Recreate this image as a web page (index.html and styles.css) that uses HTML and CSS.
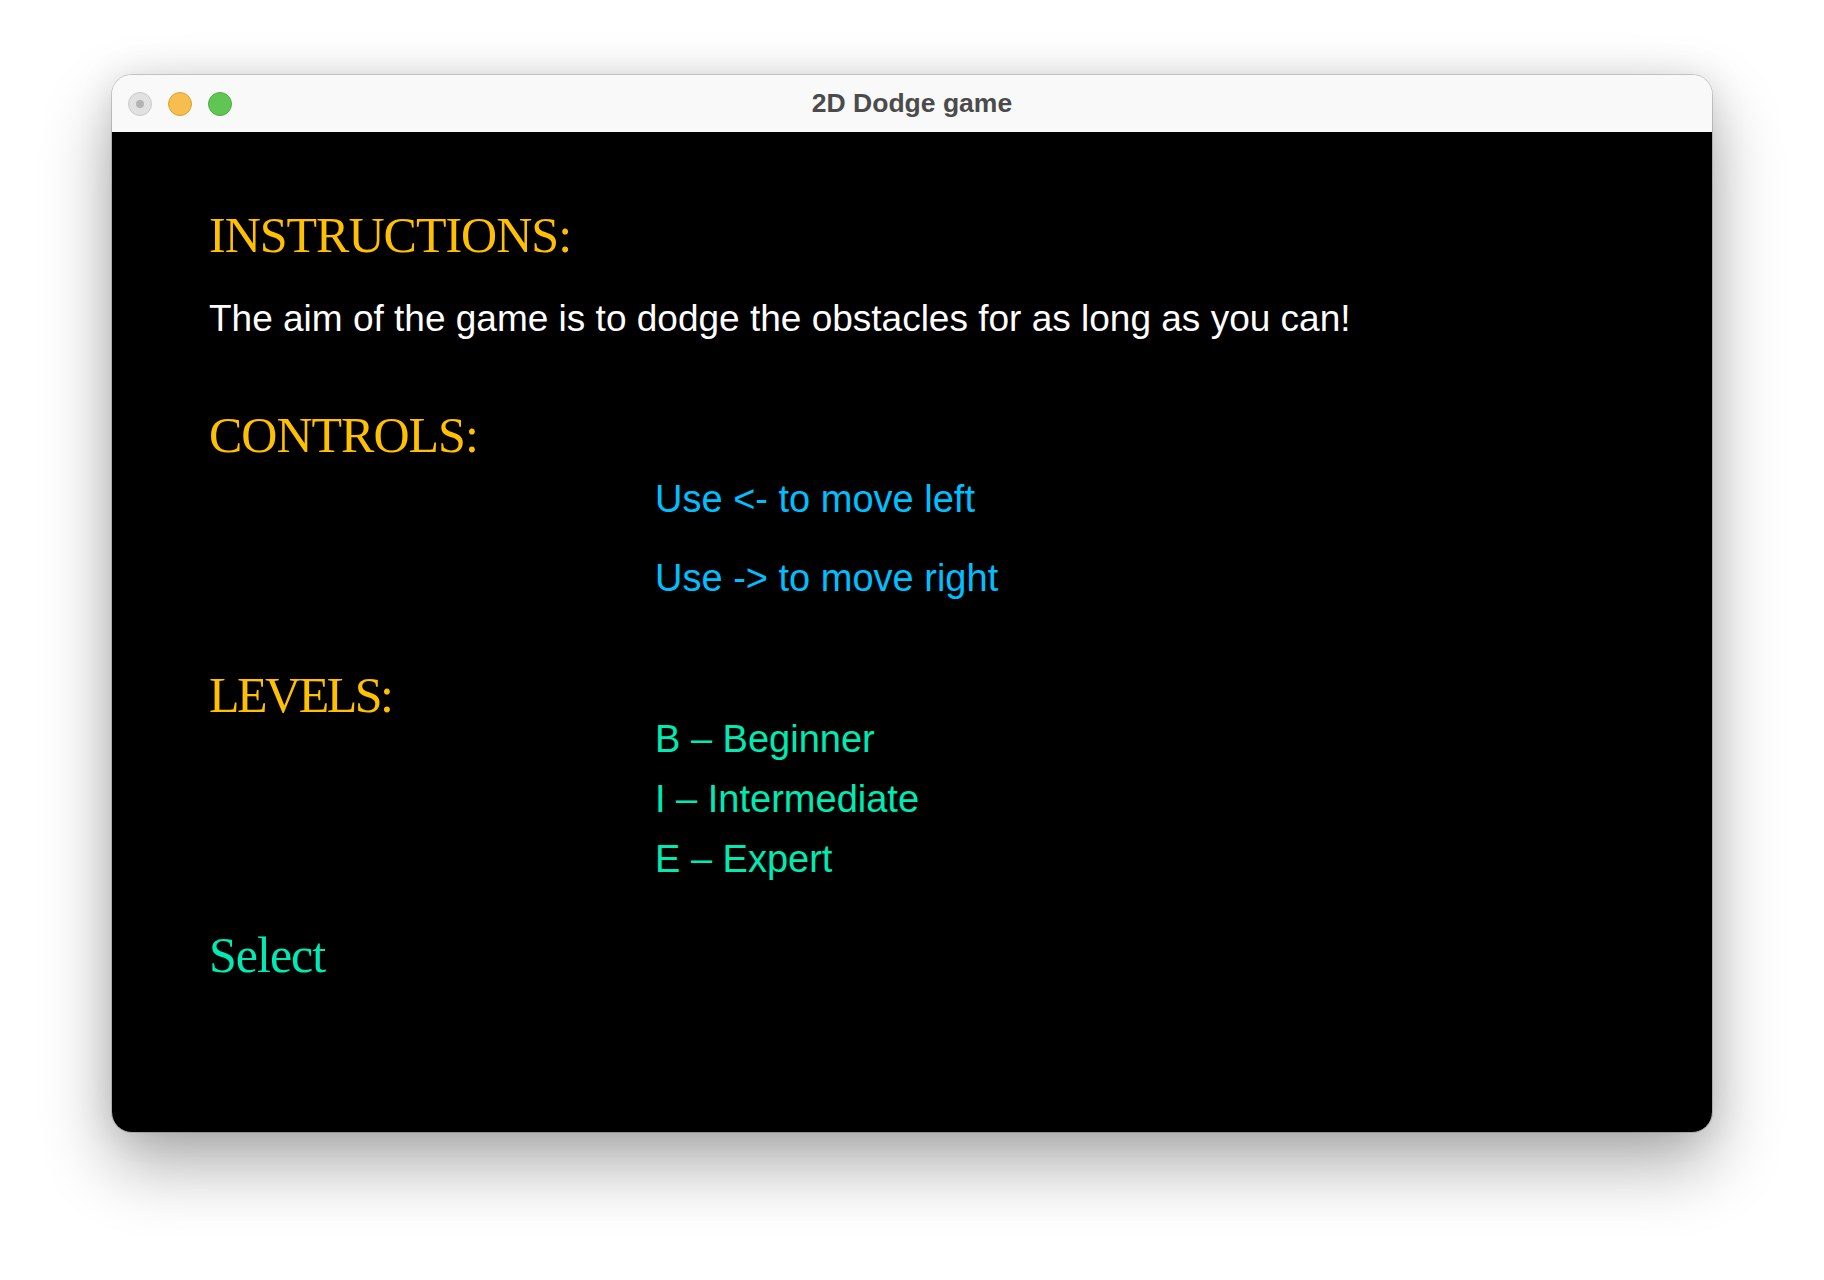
FILE: index.html
```html
<!DOCTYPE html>
<html lang="en">
<head>
<meta charset="utf-8">
<title>2D Dodge game</title>
<link rel="stylesheet" href="styles.css">
</head>
<body>
<div class="desktop">
  <div class="window">
    <div class="titlebar">
      <div class="lights">
        <span class="light close"><span class="dot"></span></span>
        <span class="light min"></span>
        <span class="light max"></span>
      </div>
      <div class="title">2D Dodge game</div>
    </div>
    <div class="canvas">
      <div class="heading h-instructions">INSTRUCTIONS:</div>
      <div class="body-text">The aim of the game is to dodge the obstacles for as long as you can!</div>
      <div class="heading h-controls">CONTROLS:</div>
      <div class="control c-left">Use &lt;- to move left</div>
      <div class="control c-right">Use -&gt; to move right</div>
      <div class="heading h-levels">LEVELS:</div>
      <div class="level l-b">B – Beginner</div>
      <div class="level l-i">I – Intermediate</div>
      <div class="level l-e">E – Expert</div>
      <div class="heading select">Select</div>
    </div>
  </div>
</div>
</body>
</html>
```
FILE: styles.css
```css
html, body {
  margin: 0;
  padding: 0;
  background: #ffffff;
}
.desktop {
  width: 1824px;
  height: 1280px;
  box-sizing: border-box;
  padding: 75px 0 0 112px;
  display: flex;
  align-items: flex-start;
}
.window {
  width: 1600px;
  height: 1057px;
  border-radius: 20px;
  overflow: hidden;
  display: flex;
  flex-direction: column;
  box-shadow: 0 0 0 1px rgba(0,0,0,0.16), 0 32px 70px rgba(0,0,0,0.33), 0 0 36px rgba(0,0,0,0.10);
}
.titlebar {
  height: 57px;
  flex: 0 0 57px;
  background: #f9f9f9;
  position: relative;
  display: flex;
  align-items: center;
}
.lights {
  display: flex;
  gap: 16px;
  margin-left: 16px;
}
.light {
  width: 24px;
  height: 24px;
  border-radius: 50%;
  box-sizing: border-box;
  display: flex;
  align-items: center;
  justify-content: center;
}
.close {
  background: #e1e1e1;
  border: 1px solid #c9c9c9;
}
.close .dot {
  width: 8px;
  height: 8px;
  border-radius: 50%;
  background: #b3b3b3;
}
.min {
  background: #f6be4f;
  border: 1px solid #dea235;
}
.max {
  background: #61c554;
  border: 1px solid #4ead40;
}
.title {
  position: absolute;
  left: 0;
  right: 0;
  top: 0;
  bottom: 0;
  display: flex;
  align-items: center;
  justify-content: center;
  font-family: "Liberation Sans", Arial, sans-serif;
  font-weight: bold;
  font-size: 26.5px;
  color: #4b4b4b;
}
.canvas {
  flex: 1;
  background: #000000;
  display: flex;
  flex-direction: column;
  align-items: flex-start;
  padding-left: 97px;
}
.heading {
  font-family: "Liberation Serif", "Times New Roman", serif;
  font-size: 50px;
  line-height: 50px;
  letter-spacing: -1px;
  color: #ffc000;
  white-space: nowrap;
}
.body-text {
  font-family: "Liberation Sans", Arial, sans-serif;
  font-size: 37px;
  line-height: 37px;
  color: #ffffff;
  white-space: nowrap;
  margin-top: 40px;
}
.control, .level {
  font-family: "Liberation Sans", Arial, sans-serif;
  font-size: 38px;
  line-height: 38px;
  white-space: nowrap;
  margin-left: 446px;
}
.control { color: #00bfff; }
.level { color: #00eab4; }
.h-instructions { margin-top: 78px; }
.h-controls { margin-top: 73px; }
.c-left { margin-top: 20px; }
.c-right { margin-top: 41px; }
.h-levels { margin-top: 73px; letter-spacing: -2.5px; }
.l-b { margin-top: 0; }
.l-i { margin-top: 22px; }
.l-e { margin-top: 22px; }
.select { margin-top: 52px; color: #00eab4; }
```
